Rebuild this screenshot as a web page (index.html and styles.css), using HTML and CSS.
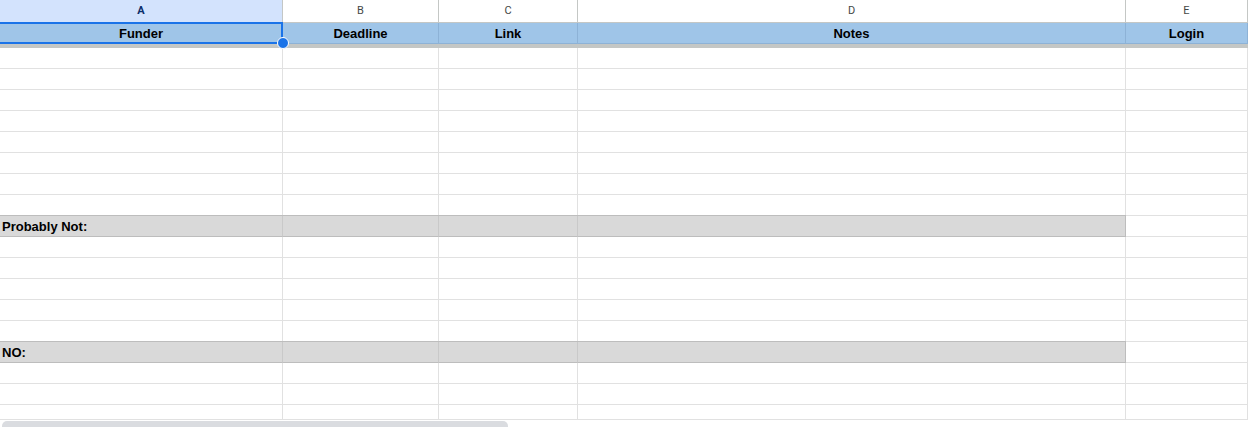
FILE: index.html
```html
<!DOCTYPE html>
<html lang="en">
<head>
    <meta charset="UTF-8">
    <meta name="viewport" content="width=device-width, initial-scale=1.0">
    <title>Funders</title>
    <link rel="stylesheet" href="styles.css">
</head>
<body>
<div class="sheet">
    <div class="col-heads">
        <div class="active">A</div>
        <div>B</div>
        <div>C</div>
        <div>D</div>
        <div>E</div>
    </div>

    <div class="row head-row">
        <div>Funder</div>
        <div>Deadline</div>
        <div>Link</div>
        <div>Notes</div>
        <div>Login</div>
    </div>
    <div class="frozen"></div>

    <div class="row"><div></div><div></div><div></div><div></div><div></div></div>
    <div class="row"><div></div><div></div><div></div><div></div><div></div></div>
    <div class="row"><div></div><div></div><div></div><div></div><div></div></div>
    <div class="row"><div></div><div></div><div></div><div></div><div></div></div>
    <div class="row"><div></div><div></div><div></div><div></div><div></div></div>
    <div class="row"><div></div><div></div><div></div><div></div><div></div></div>
    <div class="row"><div></div><div></div><div></div><div></div><div></div></div>
    <div class="row"><div></div><div></div><div></div><div></div><div></div></div>

    <div class="row section">
        <div class="shade">Probably Not:</div>
        <div class="shade"></div>
        <div class="shade"></div>
        <div class="shade"></div>
        <div></div>
    </div>

    <div class="row"><div></div><div></div><div></div><div></div><div></div></div>
    <div class="row"><div></div><div></div><div></div><div></div><div></div></div>
    <div class="row"><div></div><div></div><div></div><div></div><div></div></div>
    <div class="row"><div></div><div></div><div></div><div></div><div></div></div>
    <div class="row"><div></div><div></div><div></div><div></div><div></div></div>

    <div class="row section">
        <div class="shade">NO:</div>
        <div class="shade"></div>
        <div class="shade"></div>
        <div class="shade"></div>
        <div></div>
    </div>

    <div class="row"><div></div><div></div><div></div><div></div><div></div></div>
    <div class="row"><div></div><div></div><div></div><div></div><div></div></div>
    <div class="row"><div></div><div></div><div></div><div></div><div></div></div>

    <!-- selected cell A1 -->
    <div class="selection"></div>
    <div class="handle"></div>
</div>
<div class="hscroll">
    <div class="thumb"></div>
</div>
</body>
</html>
```

FILE: styles.css
```css
body, html {
    margin: 0;
    height: 100%;
    overflow: hidden;
    background: white;
}
body {
    font-family: "Liberation Sans", Arial, sans-serif;
    color: #000;
}
.sheet {
    position: relative;
    height: 419px;
    overflow: hidden;
}
.col-heads, .row {
    display: grid;
    grid-template-columns: 283px 156px 139px 548px 1fr;
}
.col-heads {
    height: 23px;
}
.col-heads div {
    box-sizing: border-box;
    border-right: 1px solid #c4c7c5;
    border-bottom: 1px solid #c4c7c5;
    font-family: Roboto, "Liberation Sans", sans-serif;
    font-size: 11px;
    line-height: 21px;
    text-align: center;
    color: #444746;
}
.col-heads .active {
    background: #d3e3fd;
    color: #0b2f6b;
    font-weight: bold;
}
.row {
    height: 21px;
}
.row div {
    box-sizing: border-box;
    border-right: 1px solid #e1e1e1;
    border-bottom: 1px solid #e1e1e1;
    font-size: 13px;
    line-height: 22px;
    padding: 0 2px;
    white-space: nowrap;
    overflow: hidden;
}
.head-row div {
    background: #9fc5e8;
    border-color: #8db2d6;
    font-weight: bold;
    text-align: center;
}
.frozen {
    height: 4px;
    background: #c4c7c5;
}
.section .shade {
    background: #d9d9d9;
    border-right-color: #c9c9c9;
    border-bottom-color: #bdbdbd;
    box-shadow: 0 -1px 0 #bdbdbd;
    font-weight: bold;
}
.section .shade:nth-child(4) {
    border-right-color: #bdbdbd;
}
.selection {
    position: absolute;
    left: -2px;
    top: 22px;
    width: 285px;
    height: 22px;
    box-sizing: border-box;
    border: 2px solid #1a73e8;
}
.handle {
    position: absolute;
    left: 277px;
    top: 37px;
    width: 10px;
    height: 10px;
    border: 1px solid white;
    border-radius: 50%;
    background: #1a73e8;
}
.hscroll {
    border-top: 1px solid #e1e1e1;
    padding: 1px 0 0 2px;
}
.thumb {
    width: 506px;
    height: 10px;
    border-radius: 5px;
    background: #dadce0;
}
```
